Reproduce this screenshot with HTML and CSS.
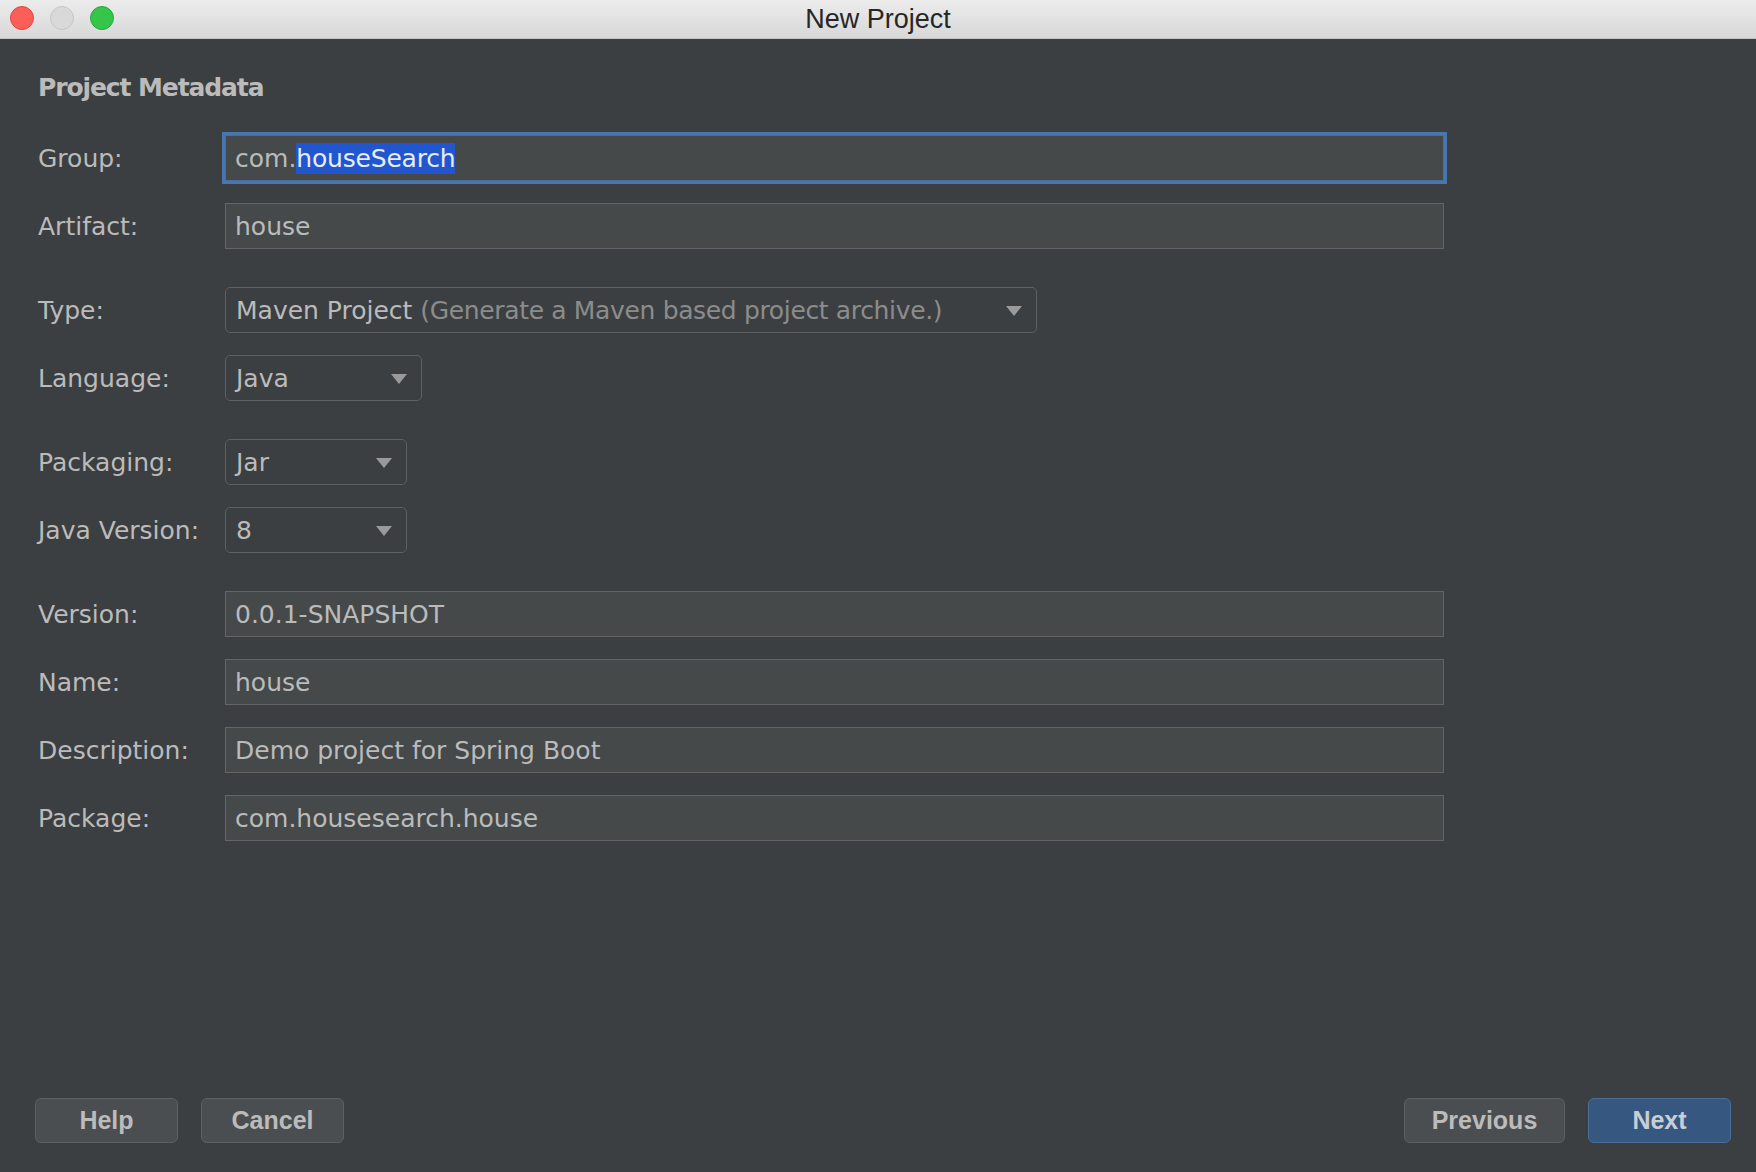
FILE: index.html
```html
<!DOCTYPE html>
<html>
<head>
<meta charset="utf-8">
<title>New Project</title>
<link rel="stylesheet" href="styles.css">
</head>
<body>
<div class="window">
  <div class="titlebar">
    <div class="lights">
      <span class="light red"></span>
      <span class="light gray"></span>
      <span class="light green"></span>
    </div>
    <div class="title">New Project</div>
  </div>
  <div class="content">
    <h1 class="heading">Project Metadata</h1>
    <div class="form">
      <div class="row">
        <div class="label">Group:</div>
        <div class="field wide focused">com.<span class="sel">houseSearch</span></div>
      </div>
      <div class="row">
        <div class="label">Artifact:</div>
        <div class="field wide">house</div>
      </div>
      <div class="row group-start">
        <div class="label">Type:</div>
        <div class="combo type"><span class="val">Maven Project <span class="hint">(Generate a Maven based project archive.)</span></span><span class="arrow"></span></div>
      </div>
      <div class="row">
        <div class="label">Language:</div>
        <div class="combo lang"><span class="val">Java</span><span class="arrow"></span></div>
      </div>
      <div class="row group-start">
        <div class="label">Packaging:</div>
        <div class="combo small"><span class="val">Jar</span><span class="arrow"></span></div>
      </div>
      <div class="row">
        <div class="label">Java Version:</div>
        <div class="combo small"><span class="val">8</span><span class="arrow"></span></div>
      </div>
      <div class="row group-start">
        <div class="label">Version:</div>
        <div class="field wide">0.0.1-SNAPSHOT</div>
      </div>
      <div class="row">
        <div class="label">Name:</div>
        <div class="field wide">house</div>
      </div>
      <div class="row">
        <div class="label">Description:</div>
        <div class="field wide">Demo project for Spring Boot</div>
      </div>
      <div class="row">
        <div class="label">Package:</div>
        <div class="field wide">com.housesearch.house</div>
      </div>
    </div>
    <div class="footer">
      <div class="btn-group">
        <button class="btn help">Help</button>
        <button class="btn cancel">Cancel</button>
      </div>
      <div class="btn-group">
        <button class="btn prev">Previous</button>
        <button class="btn primary next">Next</button>
      </div>
    </div>
  </div>
</div>
</body>
</html>
```
FILE: styles.css
```css
html, body {
  margin: 0;
  padding: 0;
  width: 1756px;
  height: 1172px;
  overflow: hidden;
  background: #3c3f41;
}
.window {
  width: 1756px;
  height: 1172px;
  display: flex;
  flex-direction: column;
}
.titlebar {
  height: 38px;
  border-bottom: 1px solid #c4c4c4;
  background: linear-gradient(#ececec, #d8d8d8);
  position: relative;
  display: flex;
  align-items: center;
  justify-content: center;
}
.lights {
  position: absolute;
  left: 10px;
  top: 6px;
  display: flex;
  gap: 16px;
}
.light {
  width: 22px;
  height: 22px;
  border-radius: 50%;
  box-sizing: content-box;
  border: 1px solid transparent;
}
.light.red { background: #fc5f57; border-color: #e0463f; }
.light.gray { background: #d9d9d9; border-color: #c6c6c6; }
.light.green { background: #35c649; border-color: #2aa83a; }
.title {
  font-family: "Liberation Sans", Arial, sans-serif;
  font-size: 27px;
  color: #262626;
  padding-top: 1px;
}
.content {
  flex: 1;
  display: flex;
  flex-direction: column;
  padding: 34px 0 29px 38px;
}
.heading {
  margin: 0;
  font-family: "DejaVu Sans", sans-serif;
  font-weight: bold;
  font-size: 25px;
  line-height: 30px;
  letter-spacing: -1.1px;
  color: #bbbbbb;
}
.form {
  margin-top: 32px;
  display: flex;
  flex-direction: column;
  gap: 22px;
}
.row {
  display: flex;
  align-items: center;
  height: 46px;
}
.row.group-start {
  margin-top: 16px;
}
.label {
  width: 187px;
  flex: none;
  font-family: "DejaVu Sans", sans-serif;
  font-size: 25px;
  color: #bbbbbb;
}
.field {
  box-sizing: border-box;
  height: 46px;
  border: 1px solid #646464;
  background: #45494a;
  font-family: "DejaVu Sans", sans-serif;
  font-size: 25px;
  color: #bbbbbb;
  padding: 0 9px;
  display: flex;
  align-items: center;
  white-space: pre;
}
.field.wide { width: 1219px; }
.field.focused {
  border-color: #4a6f9a;
  box-shadow: 0 0 0 3px #4876b0;
}
.sel {
  background: #2156cf;
  color: #e6ecf8;
  line-height: 31px;
  letter-spacing: -0.2px;
}
.combo {
  box-sizing: border-box;
  height: 46px;
  border: 1px solid #5e6163;
  border-radius: 5px;
  background: #3c3f41;
  display: flex;
  align-items: center;
  justify-content: space-between;
  padding: 0 14px 0 10px;
  font-family: "DejaVu Sans", sans-serif;
  font-size: 25px;
  color: #bbbbbb;
}
.combo.type { width: 812px; }
.combo.lang { width: 197px; }
.combo.small { width: 182px; }
.hint {
  color: #8c8c8c;
  letter-spacing: -0.35px;
}
.arrow {
  width: 0;
  height: 0;
  border-left: 8px solid transparent;
  border-right: 8px solid transparent;
  border-top: 10px solid #9a9a9a;
  margin-top: 2px;
}
.footer {
  margin-top: auto;
  display: flex;
  justify-content: space-between;
  padding-right: 25px;
  margin-left: -3px;
}
.btn-group {
  display: flex;
  gap: 23px;
}
.btn {
  box-sizing: border-box;
  height: 45px;
  border: 1px solid #5d6062;
  border-radius: 6px;
  background: #4b4e50;
  color: #bbbbbb;
  font-family: "Liberation Sans", Arial, sans-serif;
  font-weight: bold;
  font-size: 25px;
  padding: 0;
  margin: 0;
}
.btn.help, .btn.cancel { width: 143px; }
.btn.prev { width: 161px; }
.btn.next { width: 143px; }
.btn.primary {
  background: #365880;
  border-color: #4b6e96;
  color: #c8ced6;
}
```
